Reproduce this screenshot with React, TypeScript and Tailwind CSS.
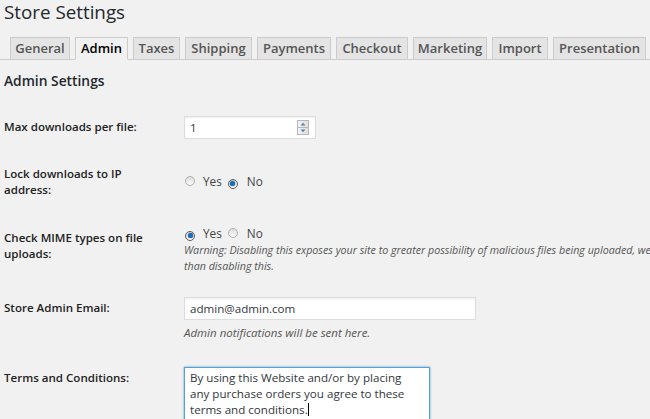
import React from "react";

function Radio({ checked }: { checked?: boolean }) {
  return (
    <span
      className={
        "inline-flex w-[10px] h-[10px] shrink-0 items-center justify-center rounded-full border bg-linear-to-b from-[#dcdcdc] to-[#fbfbfb] " +
        (checked ? "border-[#5a5a5a]" : "border-[#b0b0b0]")
      }
    >
      {checked && <span className="w-[5px] h-[5px] rounded-full bg-[#1b6fbf] shadow-[0_0_1px_#0b3e75]" />}
    </span>
  );
}

function RadioPair({ yes }: { yes: boolean }) {
  return (
    <div className="flex items-center h-[16px] text-[11.8px] text-[#444]">
      <span className="ml-[1px]"><Radio checked={yes} /></span>
      <span className="ml-[8px]">Yes</span>
      <span className="ml-[6px]"><Radio checked={!yes} /></span>
      <span className="ml-[9px]">No</span>
    </div>
  );
}

function Spinner() {
  return (
    <svg width="12" height="15" viewBox="0 0 12 15">
      <defs>
        <linearGradient id="sg" x1="0" y1="0" x2="1" y2="0">
          <stop offset="0" stopColor="#f4f4f4" />
          <stop offset="1" stopColor="#dedede" />
        </linearGradient>
      </defs>
      <rect x="0.5" y="0.5" width="11" height="14" fill="url(#sg)" stroke="#b8b8b8" />
      <line x1="0.5" y1="7.5" x2="11.5" y2="7.5" stroke="#b8b8b8" />
      <polygon points="3.5,5.5 8.5,5.5 6,2.8" fill="#5b7ec2" />
      <polygon points="3.5,9.5 8.5,9.5 6,12.2" fill="#5b7ec2" />
    </svg>
  );
}

const tabs: { name: string; w: string; active?: boolean }[] = [
  { name: "General", w: "w-[60px]" },
  { name: "Admin", w: "w-[53px]", active: true },
  { name: "Taxes", w: "w-[47px]" },
  { name: "Shipping", w: "w-[67px]" },
  { name: "Payments", w: "w-[74px]" },
  { name: "Checkout", w: "w-[72px]" },
  { name: "Marketing", w: "w-[74px]" },
  { name: "Import", w: "w-[56px]" },
  { name: "Presentation", w: "w-[93px]" },
];

const labelCls = "w-[184px] shrink-0 pl-[4px] pr-[22px] text-[11.55px] leading-[16px] font-semibold text-[#222]";
const descCls = "text-[11.5px] leading-[16px] italic text-[#555]";

export default function App() {
  return (
    <div className="w-[650px] h-[419px] overflow-hidden bg-[#f1f1f1] text-[#444] font-['Open_Sans',sans-serif]">
      <div className="h-[24px] leading-[24px] pl-[4px] text-[18.8px] font-normal text-[#23282d]">Store Settings</div>

      <div className="mt-[13px] flex gap-[5px] pl-[10px] border-b border-[#ccc] h-[23px]">
        {tabs.map((t) => (
          <div
            key={t.name}
            className={
              t.w +
              " h-[23px] shrink-0 border border-[#ccc] text-center text-[13px] leading-[21px] font-semibold " +
              (t.active ? "bg-[#f1f1f1] text-[#000] border-b-[#f1f1f1]" : "bg-[#e4e4e4] text-[#555]")
            }
          >
            {t.name}
          </div>
        ))}
      </div>

      <div className="mt-[11px] h-[20px] leading-[20px] pl-[4px] text-[13.8px] font-semibold text-[#23282d]">Admin Settings</div>

      {/* Row 1 */}
      <div className="mt-[25px] flex items-start">
        <div className={labelCls + " mt-[3px]"}>Max downloads per file:</div>
        <div className="w-[132px] h-[23px] flex items-center justify-between pl-[5px] pr-[6px] bg-white border border-[#ddd] shadow-[inset_0_1px_2px_rgba(0,0,0,0.07)] text-[11.5px] text-[#32373c]">
          <span>1</span>
          <Spinner />
        </div>
      </div>

      {/* Row 2 */}
      <div className="mt-[27px] flex items-center">
        <div className={labelCls}>Lock downloads to IP address:</div>
        <RadioPair yes={false} />
      </div>

      {/* Row 3 */}
      <div className="mt-[28px] flex items-start">
        <div className={labelCls + " mt-[3.5px]"}>Check MIME types on file uploads:</div>
        <div className="min-w-0">
          <RadioPair yes={true} />
          <div className="text-[10.7px] leading-[16px] italic text-[#555]">
            <span className="whitespace-nowrap">
              Warning: Disabling this exposes your site to greater possibility of malicious files being uploaded, we recommend installing the Fileinfo extension for PHP rather
            </span>
            <br />
            than disabling this.
          </div>
        </div>
      </div>

      {/* Row 4 */}
      <div className="mt-[23px] flex items-start">
        <div className={labelCls + " mt-[3px]"}>Store Admin Email:</div>
        <div>
          <div className="w-[292px] h-[23px] flex items-center pl-[5px] bg-white border border-[#ddd] shadow-[inset_0_1px_2px_rgba(0,0,0,0.07)] text-[11.6px] text-[#32373c]">
            admin@admin.com
          </div>
          <div className={descCls + " mt-[5px]"}>Admin notifications will be sent here.</div>
        </div>
      </div>

      {/* Row 5 */}
      <div className="mt-[26px] flex items-start">
        <div className={labelCls + " mt-[3px]"}>Terms and Conditions:</div>
        <div className="w-[246px] h-[90px] bg-white border border-[#5b9dd9] shadow-[0_0_2px_rgba(30,140,190,0.8)] pt-[2px] pl-[5px] pr-[8px] text-[11.6px] leading-[16px] text-[#32373c]">
          By using this Website and/or by placing any purchase orders you agree to these terms and conditions.
          <span className="inline-block w-px h-[13px] bg-[#000] align-middle -mt-[2px]" />
        </div>
      </div>
    </div>
  );
}
